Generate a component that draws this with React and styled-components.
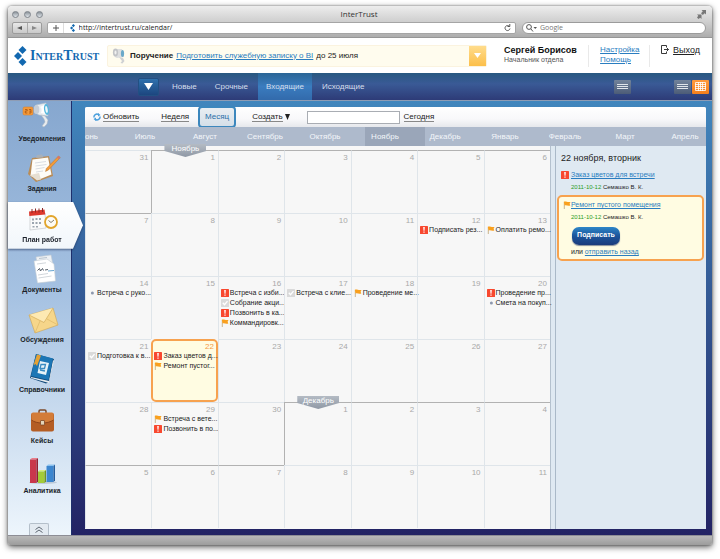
import React from "react";
import styled, { createGlobalStyle, css } from "styled-components";

const SANS = `"Liberation Sans", Arial, sans-serif`;
const SYSTEM = `"Open Sans", "Noto Sans", sans-serif`;

const GlobalStyle = createGlobalStyle`
    *, *::before, *::after {
        box-sizing: border-box;
    }
    body {
        margin: 0;
        background: #fff;
        font: 8px/10px ${SANS};
        color: #222;
    }
    button, input {
        font: inherit;
        color: inherit;
        margin: 0;
        padding: 0;
        border: 0;
        background: none;
    }
    button {
        cursor: pointer;
    }
    a {
        color: #2a7dc0;
    }
    svg {
        display: block;
        flex: none;
    }
    ul {
        list-style: none;
        margin: 0;
        padding: 0;
    }
`;

const Page = styled.div`
    min-height: 100vh;
    padding: 6px 8px 14px;
    display: flex;
`;

const Window = styled.div`
    flex: 1;
    min-width: 0;
    display: flex;
    flex-direction: column;
    border-radius: 4px 4px 2px 2px;
    box-shadow: 0 2px 6px rgba(0, 0, 0, 0.65), 0 0 2px rgba(0, 0, 0, 0.5);
`;

/* browser chrome */

const Chrome = styled.div`
    height: 32px;
    padding: 0 6px 4px 4px;
    border-radius: 4px 4px 0 0;
    border-bottom: 1px solid #969696;
    background: linear-gradient(#ededed, #cfcfcf 50%, #adadad);
    font-family: ${SYSTEM};
`;

const TitleBar = styled.div`
    height: 16px;
    display: grid;
    grid-template-columns: 1fr auto 1fr;
    align-items: center;
    color: #333;
`;

const Lights = styled.div`
    display: flex;
    gap: 5px;
`;

const Light = styled.button`
    width: 7px;
    height: 7px;
    border-radius: 50%;
    border: 1px solid #7f858c;
    background: linear-gradient(#8b9299, #dfe5ea);
`;

const Resize = styled.button`
    justify-self: end;
`;

const AddressRow = styled.div`
    display: flex;
    height: 12px;
`;

const History = styled.div`
    width: 30px;
    margin-right: 5px;
    display: flex;
    border: 1px solid #9b9b9b;
    border-radius: 2px;
    background: linear-gradient(#e8e8e8, #c9c9c9);

    button {
        flex: 1;
        display: grid;
        place-items: center;
    }
    button + button {
        border-left: 1px solid #aaa;
    }
`;

const Address = styled.div`
    flex: 1;
    display: flex;
    align-items: center;
    gap: 3px;
    padding-right: 4px;
    border: 1px solid #a5a5a5;
    border-radius: 2px;
    background: #fff;

    input {
        flex: 1;
        min-width: 0;
        height: 10px;
        color: #222;
        font-size: 7px;
    }
`;

const AddButton = styled.button`
    width: 16px;
    height: 10px;
    margin-right: 3px;
    display: grid;
    place-items: center;
    border-right: 1px solid #ddd;
`;

const SearchBox = styled.label`
    flex: 0 1 184px;
    margin-left: 6px;
    display: flex;
    align-items: center;
    gap: 3px;
    padding: 0 3px;
    border: 1px solid #9b9b9b;
    border-radius: 6px;
    background: #fff;

    input {
        width: 100%;
        height: 10px;
        font-size: 7px;
    }
    input::placeholder {
        color: #777;
    }
`;

const BottomBar = styled.div`
    height: 10px;
    border-top: 1px solid #8d8d95;
    border-radius: 0 0 2px 2px;
    background: linear-gradient(#b9b9b9, #9c9c9c);
`;

/* page header */

const Header = styled.header`
    height: 35px;
    display: flex;
    align-items: center;
    padding: 0 12px 0 6px;
    background: #fff;
`;

const Logo = styled.a`
    display: flex;
    align-items: center;
    gap: 2px;
    width: 93px;
    color: #1268b0;
    text-decoration: none;
    font: small-caps bold 14px/20px "Liberation Serif", "Times New Roman", serif;
`;

const Task = styled.div`
    flex: 1;
    height: 22px;
    display: flex;
    align-items: center;
    gap: 3px;
    padding-left: 4px;
    border: 1px solid #fbf3df;
    border-radius: 2px;
    background: #fffcee;
`;

const TaskToggle = styled.button`
    width: 17px;
    height: 20px;
    margin-left: auto;
    display: grid;
    place-items: center;
    background: linear-gradient(#ffdc8c, #fcbf4a);
`;

const User = styled.div`
    width: 84px;
    margin-left: 17px;
    padding-bottom: 2px;
    color: #555;
    font-size: 7px;
    white-space: nowrap;

    strong {
        display: block;
        color: #111;
        font-size: 9px;
    }
`;

const HelpLinks = styled.div`
    width: 62px;
    height: 22px;
    padding-left: 11px;
    border: solid #e9e9e9;
    border-width: 0 1px;
    display: flex;
    flex-direction: column;
    align-items: flex-start;
`;

const Exit = styled.a`
    display: flex;
    gap: 4px;
    margin: 0 0 12px 11px;
    color: #222;
    font-size: 9px;
`;

/* top menu */

const Menu = styled.nav`
    height: 28px;
    display: flex;
    align-items: center;
    gap: 2px;
    padding-right: 3px;
    border-bottom: 1px solid #8e9cb4;
    background: linear-gradient(#285880, #3a5a96 40%, #2d3b77);
    color: #d5deec;
`;

const MenuToggle = styled.button`
    width: 21px;
    height: 18px;
    margin: 0 3px 0 130px;
    display: grid;
    place-items: center;
    border-radius: 2px;
    border: 1px solid #225083;
    background: linear-gradient(#2f71ad, #1c467f);
`;

const MenuItem = styled.a`
    align-self: stretch;
    display: flex;
    align-items: center;
    padding: 0 8px;
    color: #d5deec;
    text-decoration: none;
    ${({ $active }) => $active && css`
        background: linear-gradient(#2a6596, #3a7cbf 50%, #326aab);
    `}
`;

const Views = styled.div`
    display: flex;
    gap: 1px;
    margin-left: ${({ $first }) => ($first ? "auto" : "41px")};
`;

const ViewButton = styled.button`
    width: 17px;
    height: 14px;
    display: grid;
    place-items: center;
    border-radius: 1px;
    background: ${({ $on }) => ($on ? "linear-gradient(#ff9a3c, #f57f1c)" : "linear-gradient(#72839b, #4c5c77)")};
`;

/* sidebar */

const Main = styled.div`
    flex: 1;
    display: flex;
    background: linear-gradient(#4186bd, #232364);
`;

const Sidebar = styled.nav`
    width: 64px;
    display: flex;
    flex-direction: column;
    border-right: 1px solid #1e2f6c;
    background: linear-gradient(#86a7cf, #a6c2e2 45%, #edf5fc);

    ul {
        flex: 1;
        display: grid;
        grid-auto-rows: 1fr;
    }
`;

const SideItem = styled.li`
    ${({ $active }) => $active && css`
        z-index: 1;
        margin-right: -12px;
        padding-bottom: 3px;
        filter: drop-shadow(0 1px 1px rgba(30, 50, 90, 0.7));
    `}
`;

const SideLink = styled.a`
    height: 100%;
    display: flex;
    flex-direction: column;
    align-items: center;
    padding-left: 5px;
    color: #1a1f29;
    font-size: 7px;
    font-weight: bold;
    text-decoration: none;
    ${({ $active }) => $active && css`
        padding-right: 12px;
        background: linear-gradient(#fff, #f1f6fb);
        clip-path: polygon(0 0, calc(100% - 10px) 0, 100% 50%, calc(100% - 10px) 100%, 0 100%);
    `}
`;

const Collapse = styled.button`
    width: 20px;
    height: 12px;
    margin: 20px 0 0 21px;
    display: grid;
    place-items: center;
    border: 1px solid #b4bfca;
    border-bottom: 0;
    border-radius: 2px 2px 0 0;
    background: #e3eaf1;
`;

/* calendar */

const Panel = styled.main`
    flex: 1;
    min-width: 0;
    margin: 6px 6px 6px 13px;
    display: flex;
    flex-direction: column;
    border-radius: 2px 2px 0 0;
    background: #dfe9f2;
`;

const Toolbar = styled.div`
    height: 20px;
    display: flex;
    align-items: center;
    padding-left: 8px;
    border-radius: 2px 2px 0 0;
    background: linear-gradient(#fff, #f8f8fa 60%, #e6e8ec);
`;

const ToolButton = styled.button`
    display: flex;
    align-items: center;
    gap: 2px;
    margin-right: ${({ $gap }) => $gap || 0}px;

    span {
        border-bottom: 1px solid #888;
        line-height: 9px;
    }
`;

const PeriodButton = styled.button`
    width: 38px;
    height: 22px;
    margin-right: 16px;
    color: #2a6ea8;
    border: 2px solid #3c87bd;
    border-radius: 4px;
    background: linear-gradient(#e9eef2, #d5dfe8);
`;

const DateInput = styled.input`
    width: 93px;
    height: 13px;
    margin-right: 4px;
    padding: 0 2px;
    border: 1px solid #a9adb3;
    background: #fff;
`;

const Months = styled.div`
    height: 19px;
    display: grid;
    grid-template-columns: 40px repeat(10, 60px);
    overflow: hidden;
    background: #aebacc;
`;

const MonthButton = styled.button`
    display: flex;
    align-items: center;
    justify-content: ${({ $first }) => ($first ? "flex-start" : "center")};
    padding-right: 20px;
    color: #f3f6fa;
    background: ${({ $active }) => ($active ? "#9aa6b9" : "none")};
`;

const Board = styled.div`
    flex: 1;
    display: flex;
`;

const GridWrap = styled.div`
    flex: 1;
    min-width: 0;
    padding-top: 4px;
    border-right: 1px solid #b4c1ce;
    background: #f7f7f7;
`;

const Grid = styled.table`
    width: 100%;
    table-layout: fixed;
    border-spacing: 0;
`;

const Day = styled.td`
    position: relative;
    height: 63px;
    padding: 3px 0 0 2px;
    vertical-align: top;
    border: solid #dfe5ea;
    border-width: 1px 0 0 1px;
    border-top-color: ${({ $top }) => ($top ? "#b2b2b2" : "#dfe5ea")};
    border-left-color: ${({ $left }) => ($left ? "#b2b2b2" : "#dfe5ea")};
    ${({ $today }) => $today && css`
        padding: 2px 0 0 1px;
        border: 2px solid #f7a24f;
        border-radius: 5px;
        background: #fffce2;
    `}
`;

const DayNumber = styled.div`
    padding-right: ${({ $today }) => ($today ? 2 : 3)}px;
    text-align: right;
    line-height: 8px;
    color: ${({ $today }) => ($today ? "#f59a45" : "#a9a9a9")};
`;

const Event = styled.li`
    display: flex;
    align-items: center;
    gap: 1px;
    height: 10px;
    font-size: 7px;
    white-space: nowrap;
`;

const Badge = styled.div`
    position: absolute;
    z-index: 1;
    top: -7px;
    left: 12px;
    width: 42px;
    height: 13px;
    text-align: center;
    line-height: 9px;
    color: #fff;
    background: linear-gradient(#b4bbc4, #8f98a5);
    clip-path: polygon(0 0, 100% 0, 100% 7px, 50% 100%, 0 7px);
`;

const Details = styled.aside`
    width: 151px;
    margin-left: 4px;
    padding: 7px 2px 0 1px;
    border-left: 1px solid #aab9c8;
    background: #dfe9f2;

    h2 {
        margin: 0 0 6px 4px;
        font-size: 9px;
        line-height: 10px;
        font-weight: normal;
    }
`;

const Entry = styled.article`
    padding: 0 4px;
    display: flex;
    gap: 2px;
    font-size: 7px;
    line-height: 12px;
    ${({ $card }) => $card && css`
        margin-top: 2px;
        padding: 2px 4px 1px;
        border: 2px solid #f7a24f;
        border-radius: 5px;
        background: #fffce2;
        gap: 0;
    `}

    svg {
        margin-top: 2px;
    }
`;

const Meta = styled.div`
    font-size: 6px;

    time {
        color: #2a9d1c;
    }
`;

const SignButton = styled.button`
    display: block;
    width: 48px;
    height: 18px;
    margin: 4px 0 1px 1px;
    padding-bottom: 2px;
    color: #fff;
    font-weight: bold;
    border-radius: 7px;
    background: linear-gradient(#2d86c8, #1c559b 50%, #1b3b7c);
    box-shadow: 0 1px 1px #88909c;
`;

/* icons */

const Diamonds = ({ size }) => (
    <svg width={size * 0.7} height={size} viewBox="0 0 14 20" fill="#1268b0">
        <path d="M8.5 0l4 4-4 4-4-4zM4 6l4 4-4 4-4-4zM8.5 12l4 4-4 4-4-4z" />
    </svg>
);

const Triangle = ({ w = 8, h = 6, color = "#fff", dir = "down" }) => {
    const points = { down: "0,0 10,0 5,10", left: "10,0 10,10 0,5", right: "0,0 0,10 10,5" };
    return (
        <svg width={w} height={h} viewBox="0 0 10 10" preserveAspectRatio="none">
            <polygon points={points[dir]} fill={color} />
        </svg>
    );
};

const Lines = () => (
    <svg width="11" height="8" viewBox="0 0 11 8" fill="#dfe4ea">
        <path d="M0 1h11v1H0zM0 3h11v1H0zM0 5h11v1H0z" />
    </svg>
);

const GridIcon = () => (
    <svg width="11" height="9" viewBox="0 0 11 9" stroke="#fff" fill="none">
        <path d="M.5.5h10v8H.5zM3.5 0v9M5.5 0v9M7.5 0v9M0 2.5h11M0 4.5h11M0 6.5h11" strokeWidth=".8" />
    </svg>
);

const Mark = ({ type }) => (
    <svg width="8" height="8" viewBox="0 0 8 8">
        {type === "alert" && (
            <>
                <rect width="8" height="8" rx=".6" fill="#f8482f" />
                <path d="M3.2 1h1.6l-.3 3.8h-1zM3.4 5.6h1.2v1.2H3.4z" fill="#fff" />
            </>
        )}
        {type === "flag" && (
            <>
                <path d="M1.3 1v7" stroke="#c8b48c" />
                <path d="M.8.8c2.2-.7 3.6.8 6.7.1L6.6 2.8l.7 1.7c-2.5.8-3.6-.6-5.7 0z" fill="#f9a01e" />
            </>
        )}
        {type === "done" && (
            <>
                <rect width="8" height="8" rx=".6" fill="#dadada" />
                <path d="M1.8 3.8l1.7 1.9 3-3.6" stroke="#fff" strokeWidth="1.3" fill="none" />
            </>
        )}
        {type === "dot" && <circle cx="4.4" cy="4" r="1.5" fill="#8d98ae" />}
    </svg>
);

const Megaphone = () => (
    <g>
        <path d="M16 4l10-2 2 13-9-1c-4-1-5-8-3-10z" fill="#e9edf1" stroke="#b4bfca" strokeWidth=".6" />
        <ellipse cx="16.500" cy="8.500" rx="2.800" ry="4.600" fill="#c6ced7" />
        <path d="M20 6c2 1 2 4 1 6l5 1V3z" fill="#fff" />
        <ellipse cx="26.500" cy="8.500" rx="2.500" ry="5.500" fill="#55b6dd" transform="rotate(-8 26.500 8.500)" />
        <ellipse cx="26.500" cy="8.500" rx="1.200" ry="3.500" fill="#eef7fb" transform="rotate(-8 26.500 8.500)" />
        <path d="M21 14l4 1 3 4-1 4-3 3-2-1 3-4-1-3z" fill="#e8ebee" stroke="#a8b3bf" strokeWidth=".5" />
    </g>
);

const SIDE_ICONS = {
    notices: (
        <>
            <Megaphone />
            <rect x="3" y="6" width="10" height="8" rx="1.500" fill="#f4993a" stroke="#d97d22" strokeWidth=".5" />
            <path d="M5 8.500h2.200v1.500H5.300v2h2M9 8.500h2v3.500H9m.3-1.800H11" stroke="#a85510" strokeWidth=".8" fill="none" />
        </>
    ),
    tasks: (
        <>
            <path d="M12 7l17-2 4 20-17 6-8-8z" fill="#b98c57" />
            <path d="M12.500 8.500L28 6.500l3.500 17-11 4.500-10-3z" fill="#fdfcf8" />
            <path d="M10 24l9-2 2 6.500-4 1z" fill="#e6dfd2" />
            <path d="M16 7l1-3 5-.5 1.500 3z" fill="#a9b0b8" />
            <path d="M15 12l11-1.500M15.500 15l11-1.500M15.500 18l9-1.500M16 21l7-1" stroke="#cfd4da" strokeWidth=".8" />
            <path d="M38.500 5l1.800 1.600L28.500 19l-3 1.500.8-3z" fill="#f39a36" stroke="#a5682a" strokeWidth=".4" />
            <path d="M38.500 5l1.800 1.600-1.600 1.700L37 6.700z" fill="#d9756b" />
        </>
    ),
    plan: (
        <>
            <path d="M10 11h15l1 15-16 2z" fill="#fafafa" stroke="#bcbfc5" strokeWidth=".6" />
            <path d="M9 9.500l15.500-2 .8 5-16 1.500z" fill="#dc372d" />
            <path d="M12 7v4M15.500 6.500v4M19 6.500v4M22.500 6v4" stroke="#8b2b28" />
            <path d="M12 16.500h2v2h-2zM15.500 16h2v2h-2zM19 16h2v2h-2zM12 20h2v2h-2zM15.500 20h2v2h-2zM19 20h2v2h-2zM12.500 24h2v1.500h-2zM16 24h2v1.500h-2z" fill="#9ba4ae" />
            <circle cx="31" cy="20" r="6" fill="#fdfbf4" stroke="#e2a52c" strokeWidth="1.800" />
            <path d="M28.500 18.500l2.500 2 3-2.500" stroke="#625a4a" strokeWidth=".8" fill="none" />
        </>
    ),
    docs: (
        <>
            <path d="M16 5l15-2 4 20-15 3z" fill="#eef1f4" stroke="#c5ccd4" strokeWidth=".6" />
            <path d="M14 9l13-2 7 5 1.500 17-18 2z" fill="#fff" stroke="#c5ccd4" strokeWidth=".6" />
            <path d="M19 6.500l8-1" stroke="#b9c4cf" />
            <path d="M17 12l9-1.200M18 23l10-1.500M18.500 26l13-2" stroke="#c5cbd2" strokeWidth=".8" />
            <path d="M17.500 18.500l2-2 1 2.500 2-2.500 1 2M25 18l3-.5" stroke="#555d68" strokeWidth="1" fill="none" />
            <path d="M28 19l6-.5" stroke="#68a5cf" />
        </>
    ),
    mail: (
        <>
            <path d="M9 13L33 6l5 17-23 8z" fill="#f6d68a" stroke="#cca552" strokeWidth=".6" />
            <path d="M9 13l15 7.500L33 6" fill="#fde9b2" stroke="#d3ac59" strokeWidth=".7" />
            <path d="M15 31l5-12M38 23l-11-6" stroke="#ddb869" strokeWidth=".7" />
        </>
    ),
    books: (
        <>
            <path d="M16 2l18 5-5 23-3 1.500L10 26z" fill="#124a7b" />
            <path d="M11 25l18 4 4-21 1 1-5 22-18-5z" fill="#e6ebef" />
            <path d="M16 2l17 4.500L28.500 28 11 24z" fill="#1c76b5" />
            <path d="M20 9l9 2-3 12-8.500-2z" fill="#e8f3f8" />
            <path d="M21 12.500h4.500l-1 4H20zM20 18l5 1" stroke="#3b8cc2" strokeWidth="1.300" fill="none" />
            <path d="M17 2.500l4 1-4 10.500-1.500-2-2 1.200z" fill="#e4a135" />
        </>
    ),
    cases: (
        <>
            <path d="M19 10V8.200c0-1 .6-1.200 1.200-1.200h4.600c1 0 1.200.6 1.200 1.200V10" stroke="#7b4a2b" strokeWidth="1.500" fill="none" />
            <rect x="11" y="10" width="23" height="18.500" rx="2" fill="#b45d24" />
            <path d="M11.500 11c0-1 1-1.500 2-1.500h18c1 0 2 .5 2 1.500v6c-6 4-17 4-22 0z" fill="#d37c38" />
            <path d="M11.500 17c5 4 16 4 22 0" stroke="#8a4218" strokeWidth=".9" fill="none" />
            <rect x="20.500" y="17.500" width="4" height="4.500" rx=".5" fill="#e4d4b8" stroke="#713b1d" strokeWidth=".7" />
        </>
    ),
    chart: (
        <>
            <ellipse cx="23" cy="29.500" rx="14" ry="1.500" fill="#bdcad8" />
            <path d="M10 6.500l2-1.500h6l-1.500 1.500z" fill="#ec7d89" />
            <path d="M10 6.500h6.500V30H10z" fill="#c9384c" />
            <path d="M16.500 6.500L18 5v23.500L16.500 30z" fill="#8f2234" />
            <path d="M18 18.500l1.500-1.500H26l-1.500 1.500z" fill="#d8ec85" />
            <path d="M18 18.500h6.500V30H18z" fill="#a3cb38" />
            <path d="M24.500 18.500L26 17v11.500L24.500 30z" fill="#70951e" />
            <path d="M26.500 13l1.500-1.500h7L33.500 13z" fill="#8cc1ee" />
            <path d="M26.500 13h7v16h-7z" fill="#3c86cf" />
            <path d="M33.500 13l1.500-1.500v16L33.500 29z" fill="#255c9c" />
        </>
    ),
};

/* data */

const SECTIONS = [
    { name: "Уведомления", icon: "notices" },
    { name: "Задания", icon: "tasks" },
    { name: "План работ", icon: "plan", active: true },
    { name: "Документы", icon: "docs" },
    { name: "Обсуждения", icon: "mail" },
    { name: "Справочники", icon: "books" },
    { name: "Кейсы", icon: "cases" },
    { name: "Аналитика", icon: "chart" },
];

const MONTHS = [
    "онь", "Июль", "Август", "Сентябрь", "Октябрь", "Ноябрь",
    "Декабрь", "Январь", "Февраль", "Март", "Апрель",
];

const EVENTS = {
    12: [["alert", "Подписать рез..."]],
    13: [["flag", "Оплатить ремо..."]],
    14: [["dot", "Встреча с руко..."]],
    16: [
        ["alert", "Встреча с изби..."],
        ["done", "Собрание акци..."],
        ["alert", "Позвонить в ка..."],
        ["flag", "Коммандировк..."],
    ],
    17: [["done", "Встреча с клие..."]],
    18: [["flag", "Проведение ме..."]],
    20: [["alert", "Проведение пр..."], ["dot", "Смета на покуп..."]],
    21: [["done", "Подготовка к в..."]],
    22: [["alert", "Заказ цветов д..."], ["flag", "Ремонт пустог..."]],
    29: [["flag", "Встреча с вете..."], ["alert", "Позвонить в по..."]],
};

// offset counts days from 1 November, the grid starts on 31 October
const WEEKS = Array.from({ length: 6 }, (_, week) =>
    Array.from({ length: 7 }, (_, day) => {
        const offset = week * 7 + day - 1;
        const november = offset >= 0 && offset < 30;
        const number = offset < 0 ? 31 : (offset % 30) + 1;
        return {
            number,
            today: november && number === 22,
            top: (offset >= 0 && offset < 7) || (offset >= 30 && offset < 37),
            left: offset === 0 || offset === 30,
            month: { 0: "Ноябрь", 30: "Декабрь" }[offset],
            events: (november && EVENTS[number]) || [],
        };
    })
);

const BrowserBar = () => (
    <Chrome>
        <TitleBar>
            <Lights>
                <Light aria-label="Закрыть" />
                <Light aria-label="Свернуть" />
                <Light aria-label="Развернуть" />
            </Lights>
            <span>InterTrust</span>
            <Resize aria-label="На весь экран">
                <svg width="9" height="9" viewBox="0 0 9 9" fill="#777">
                    <path d="M4.500 0H9v4.500L7.700 3.200 5.800 5 4 3.200l1.800-1.900zM0 4.500h4.500V9L3.200 7.700 1.500 9 0 7.500l1.300-1.700z" />
                </svg>
            </Resize>
        </TitleBar>
        <AddressRow>
            <History>
                <button aria-label="Назад"><Triangle w={5} h={4} color="#555" dir="left" /></button>
                <button aria-label="Вперёд"><Triangle w={5} h={4} color="#888" dir="right" /></button>
            </History>
            <Address>
                <AddButton aria-label="Добавить закладку">
                    <svg width="6" height="6" viewBox="0 0 6 6" stroke="#555">
                        <path d="M3 0v6M0 3h6" />
                    </svg>
                </AddButton>
                <Diamonds size={8} />
                <input aria-label="Адрес" defaultValue="http://intertrust.ru/calendar/" />
                <svg width="7" height="8" viewBox="0 0 7 8" fill="none" stroke="#555">
                    <path d="M5.500 2.500A2.500 2.500 0 1 0 6 4.500M3.500 2.500h2.300V0" />
                </svg>
            </Address>
            <SearchBox>
                <svg width="11" height="8" viewBox="0 0 11 8" fill="none" stroke="#555">
                    <circle cx="3" cy="3" r="2.400" />
                    <path d="M4.800 4.800L7 7.500" />
                    <path d="M7.500 3h3.500L9.200 5z" fill="#555" stroke="none" />
                </svg>
                <input aria-label="Поиск" placeholder="Google" />
            </SearchBox>
        </AddressRow>
    </Chrome>
);

const TopHeader = () => (
    <Header>
        <Logo href="#">
            <Diamonds size={20} />
            InterTrust
        </Logo>
        <Task>
            <svg width="15" height="17" viewBox="0 0 15 17">
                <path d="M2 2l8 0 2 8-7 1C1 10 0 4 2 2z" fill="#dedfe0" />
                <ellipse cx="3.500" cy="5.500" rx="2.600" ry="4" fill="#c2c4c7" />
                <ellipse cx="3.500" cy="5.500" rx="1" ry="2" fill="#f1f1f1" />
                <ellipse cx="10.500" cy="6.500" rx="1.600" ry="3.600" fill="#6aa9c9" />
                <path d="M7 10l4 1 1.500 3-2 2.500-2-.5 1.500-2z" fill="#cfd1d3" />
            </svg>
            <strong>Поручение</strong>
            <a href="#">Подготовить служебную записку о BI</a>
            <span>до 25 июля</span>
            <TaskToggle aria-label="Показать поручения"><Triangle w={7} h={5} /></TaskToggle>
        </Task>
        <User>
            <strong>Сергей Борисов</strong>
            Начальник отдела
        </User>
        <HelpLinks>
            <a href="#">Настройка</a>
            <a href="#">Помощь</a>
        </HelpLinks>
        <Exit href="#">
            <svg width="8" height="9" viewBox="0 0 8 9" fill="none" stroke="#222">
                <path d="M5.500 2.500v-2h-5v8h5v-2M3 4.500h4.500M6 3l1.500 1.500L6 6" strokeWidth=".9" />
            </svg>
            Выход
        </Exit>
    </Header>
);

const TopMenu = () => (
    <Menu>
        <MenuToggle aria-label="Меню"><Triangle w={9} h={7} /></MenuToggle>
        {["Новые", "Срочные", "Входящие", "Исходящие"].map((name) => (
            <MenuItem href="#" key={name} $active={name === "Входящие"}>{name}</MenuItem>
        ))}
        <Views $first>
            <ViewButton aria-label="Список"><Lines /></ViewButton>
        </Views>
        <Views>
            <ViewButton aria-label="Строки"><Lines /></ViewButton>
            <ViewButton aria-label="Сетка" $on><GridIcon /></ViewButton>
        </Views>
    </Menu>
);

const SideMenu = () => (
    <Sidebar>
        <ul>
            {SECTIONS.map(({ name, icon, active }) => (
                <SideItem key={name} $active={active}>
                    <SideLink href="#" $active={active}>
                        <svg width="44" height="33" viewBox="0 0 44 33">{SIDE_ICONS[icon]}</svg>
                        {name}
                    </SideLink>
                </SideItem>
            ))}
        </ul>
        <Collapse aria-label="Свернуть меню">
            <svg width="8" height="7" viewBox="0 0 8 7" fill="none" stroke="#5d6670">
                <path d="M.5 3.500L4 1l3.500 2.500M.5 6.500L4 4l3.500 2.500" />
            </svg>
        </Collapse>
    </Sidebar>
);

const Calendar = () => (
    <Grid>
        <tbody>
            {WEEKS.map((days, week) => (
                <tr key={week}>
                    {days.map(({ number, today, top, left, month, events }) => (
                        <Day key={number} $today={today} $top={top} $left={left}>
                            {month && <Badge>{month}</Badge>}
                            <DayNumber $today={today}>{number}</DayNumber>
                            <ul>
                                {events.map(([type, text]) => (
                                    <Event key={text}>
                                        <Mark type={type} />
                                        {text}
                                    </Event>
                                ))}
                            </ul>
                        </Day>
                    ))}
                </tr>
            ))}
        </tbody>
    </Grid>
);

const DayDetails = () => (
    <Details>
        <h2>22 ноября, вторник</h2>
        <Entry>
            <Mark type="alert" />
            <div>
                <a href="#">Заказ цветов для встречи</a>
                <Meta><time>2011-10-12</time> Семашко В. К.</Meta>
            </div>
        </Entry>
        <Entry $card>
            <Mark type="flag" />
            <div>
                <a href="#">Ремонт пустого помещения</a>
                <Meta><time>2011-10-12</time> Семашко В. К.</Meta>
                <SignButton>Подписать</SignButton>
                <div>или <a href="#">отправить назад</a></div>
            </div>
        </Entry>
    </Details>
);

export default function App() {
    return (
        <Page>
            <GlobalStyle />
            <Window>
                <BrowserBar />
                <TopHeader />
                <TopMenu />
                <Main>
                    <SideMenu />
                    <Panel>
                        <Toolbar>
                            <ToolButton $gap={22}>
                                <svg width="8" height="8" viewBox="0 0 8 8" fill="none" stroke="#4a9fdc" strokeWidth="1.500">
                                    <path d="M1 4.500A3 3 0 0 1 5.500 1.500M7 3.500A3 3 0 0 1 2.500 6.500" />
                                    <path d="M5 0l2.500 2L5 3.500zM3 4.500L.5 6 3 8z" fill="#4a9fdc" stroke="none" />
                                </svg>
                                <span>Обновить</span>
                            </ToolButton>
                            <ToolButton $gap={9}><span>Неделя</span></ToolButton>
                            <PeriodButton>Месяц</PeriodButton>
                            <ToolButton $gap={17}>
                                <span>Создать</span>
                                <Triangle w={5} h={6} color="#222" />
                            </ToolButton>
                            <DateInput aria-label="Дата" />
                            <ToolButton><span>Сегодня</span></ToolButton>
                        </Toolbar>
                        <Months>
                            {MONTHS.map((name, i) => (
                                <MonthButton key={name} $first={i === 0} $active={name === "Ноябрь"}>{name}</MonthButton>
                            ))}
                        </Months>
                        <Board>
                            <GridWrap><Calendar /></GridWrap>
                            <DayDetails />
                        </Board>
                    </Panel>
                </Main>
                <BottomBar />
            </Window>
        </Page>
    );
}
